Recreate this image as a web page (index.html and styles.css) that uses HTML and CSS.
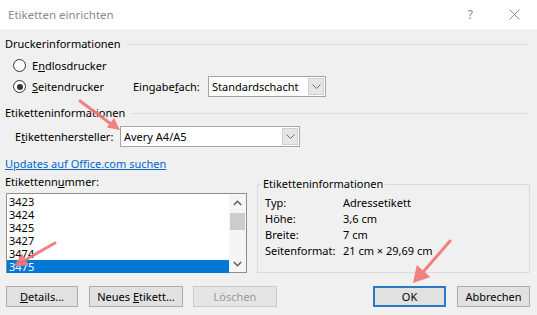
FILE: index.html
```html
<!DOCTYPE html>
<html lang="de">
<head>
<meta charset="UTF-8">
<title>Etiketten einrichten</title>
<link rel="stylesheet" href="styles.css">
</head>
<body>

<div class="titlebar">
  <span class="title">Etiketten einrichten</span>
  <span class="tb-icons">
    <span class="help">?</span>
    <svg class="close" width="11" height="11" viewBox="0 0 11 11"><path d="M0.5 0.5 L10.5 10.5 M10.5 0.5 L0.5 10.5" stroke="#8a8a8a" stroke-width="1" fill="none"/></svg>
  </span>
</div>

<div class="dialog">
  <div class="group-head"><span>Druckerinformationen</span></div>

  <div class="radio-row first">
    <label class="radio-label"><span class="radio"></span>E<u>n</u>dlosdrucker</label>
  </div>
  <div class="radio-row">
    <label class="radio-label"><span class="radio checked"></span><u>S</u>eitendrucker</label>
    <span class="field-label tray-label">Eingabe<u>f</u>ach:</span>
    <div class="combo tray">
      <span class="combo-text">Standardschacht</span>
      <span class="dd"><svg width="9" height="5" viewBox="0 0 9 5"><path d="M0.5 0.5 L4.5 4.5 L8.5 0.5" stroke="#6d6d6d" fill="none"/></svg></span>
    </div>
  </div>

  <div class="group-head second"><span>Etiketteninformationen</span></div>

  <div class="maker-row">
    <span class="field-label maker-label">E<u>t</u>ikettenhersteller:</span>
    <div class="combo maker">
      <span class="combo-text">Avery A4/A5</span>
      <span class="dd"><svg width="9" height="5" viewBox="0 0 9 5"><path d="M0.5 0.5 L4.5 4.5 L8.5 0.5" stroke="#6d6d6d" fill="none"/></svg></span>
    </div>
  </div>

  <a class="link" href="#">Updates auf Office.com suchen</a>

  <div class="lower">
    <div class="list-col">
      <div class="list-label">Etikettenn<u>u</u>mmer:</div>
      <div class="listbox">
        <ul class="items">
          <li>3423</li>
          <li>3424</li>
          <li>3425</li>
          <li>3427</li>
          <li>3474</li>
          <li class="selected">3475</li>
        </ul>
        <div class="scrollbar">
          <span class="sb-arrow"><svg width="9" height="6" viewBox="0 0 9 6"><path d="M0.8 5 L4.5 1.3 L8.2 5" stroke="#606060" stroke-width="1.6" fill="none"/></svg></span>
          <span class="sb-thumb"></span>
          <span class="sb-space"></span>
          <span class="sb-arrow"><svg width="9" height="6" viewBox="0 0 9 6"><path d="M0.8 1 L4.5 4.7 L8.2 1" stroke="#606060" stroke-width="1.6" fill="none"/></svg></span>
        </div>
      </div>
    </div>

    <fieldset class="info">
      <legend>Etiketteninformationen</legend>
      <div class="info-grid">
        <span>Typ:</span><span>Adressetikett</span>
        <span>Höhe:</span><span>3,6 cm</span>
        <span>Breite:</span><span>7 cm</span>
        <span>Seitenformat:</span><span>21 cm × 29,69 cm</span>
      </div>
    </fieldset>
  </div>

  <div class="buttons">
    <button class="btn details"><u>D</u>etails...</button>
    <button class="btn new">Neues <u>E</u>tikett...</button>
    <button class="btn delete" disabled>Löschen</button>
    <button class="btn ok">OK</button>
    <button class="btn cancel">Abbrechen</button>
  </div>
</div>

<!-- annotation arrows drawn over the screenshot -->
<svg class="arrows" width="537" height="315" viewBox="0 0 537 315">
  <g stroke="#f27474" stroke-width="3" stroke-linecap="round" fill="#f27474" opacity="0.9">
    <line x1="80" y1="101" x2="111" y2="124"/>
    <polygon points="120,130 106.8,127.6 114,118" stroke="none"/>
    <line x1="55" y1="243" x2="25" y2="260"/>
    <polygon points="14,266 21.9,253.5 28.7,265.7" stroke="none"/>
    <line x1="450" y1="241" x2="424" y2="271"/>
    <polygon points="413,283 430.3,276.9 416.8,265.1" stroke="none"/>
  </g>
</svg>

</body>
</html>
```

FILE: styles.css
```css
/* Dialog styles */
body {
  margin: 0;
  width: 537px;
  height: 315px;
  overflow: hidden;
  position: relative;
  background: #f0f0f0;
  font-family: "Noto Sans", sans-serif;
  font-size: 11px;
  line-height: 16px;
  color: #000;
}

u {
  text-decoration-thickness: 1px;
  text-underline-offset: 1px;
}

.titlebar {
  height: 29px;
  background: #fff;
  display: flex;
  align-items: center;
  justify-content: space-between;
  padding: 0 17px 0 8px;
}

.title {
  color: #8a8a8a;
  font-size: 11.5px;
}

.tb-icons {
  display: flex;
  align-items: center;
  gap: 36px;
}

.help {
  color: #8a8a8a;
  font-size: 12px;
}

.dialog {
  padding: 7px 7px 0 5px;
}

.group-head {
  display: flex;
  align-items: center;
  height: 16px;
}

.group-head::after {
  content: "";
  flex: 1;
  border-top: 1px solid #dcdcdc;
  margin: 0 3px 0 6px;
}

.group-head.second {
  margin-top: 8px;
}

.radio-row {
  display: flex;
  align-items: center;
  height: 21px;
  padding-left: 8px;
}

.radio-row.first {
  margin-top: 3px;
}

.radio-label {
  display: flex;
  align-items: center;
  width: 120px;
}

.radio {
  width: 11px;
  height: 11px;
  border: 1px solid #333;
  border-radius: 50%;
  background: #fff;
  margin-right: 6px;
  position: relative;
}

.radio.checked::after {
  content: "";
  position: absolute;
  left: 2.5px;
  top: 2.5px;
  width: 6px;
  height: 6px;
  border-radius: 50%;
  background: #333;
}

.field-label {
  display: inline-block;
}

.tray-label {
  width: 75px;
}

.combo {
  height: 21px;
  box-sizing: border-box;
  border: 1px solid #a5a5a5;
  background: #fff;
  display: flex;
  align-items: center;
}

.combo-text {
  flex: 1;
  padding-left: 3px;
}

.combo .dd {
  width: 16px;
  height: 17px;
  margin-right: 1px;
  box-sizing: border-box;
  border: 1px solid #cfcfcf;
  background: #e6e6e6;
  display: flex;
  align-items: center;
  justify-content: center;
}

.tray {
  width: 118px;
}

.maker-row {
  display: flex;
  align-items: center;
  height: 21px;
  margin-top: 5px;
  padding-left: 10px;
}

.maker-label {
  width: 105px;
}

.maker {
  width: 180px;
}

.link {
  display: inline-block;
  margin-top: 9px;
  color: #0066cc;
  text-decoration: underline;
  text-decoration-thickness: 1px;
}

.lower {
  display: flex;
  margin-top: 2px;
}

.list-col {
  width: 242px;
}

.listbox {
  margin-top: 3px;
  margin-left: 1px;
  height: 80px;
  box-sizing: border-box;
  border: 1px solid #8f8f8f;
  background: #fff;
  display: flex;
}

.items {
  list-style: none;
  margin: 0;
  padding: 1px 0 0 0;
  flex: 1;
}

.items li {
  height: 13px;
  line-height: 13px;
  padding-left: 2px;
}

.items li.selected {
  background: #0078d7;
  color: #fff;
}

.scrollbar {
  width: 17px;
  background: #f5f5f5;
  display: flex;
  flex-direction: column;
}

.sb-arrow {
  height: 17px;
  display: flex;
  align-items: center;
  justify-content: center;
}

.sb-thumb {
  height: 17px;
  margin: 2px 1px 0;
  background: #cdcdcd;
}

.sb-space {
  flex: 1;
}

.info {
  flex: 1;
  margin: 2px 0 0 10px;
  padding: 3px 7px 10px 3px;
  border: 1px solid #dcdcdc;
  min-width: 0;
}

.info legend {
  padding: 0 2px;
  line-height: 16px;
}

.info-grid {
  display: grid;
  grid-template-columns: 78px 1fr;
  grid-auto-rows: 16px;
  padding-left: 4px;
}

.buttons {
  display: flex;
  margin-top: 13px;
  padding-left: 1px;
}

.btn {
  height: 21px;
  box-sizing: border-box;
  border: 1px solid #adadad;
  background: #e1e1e1;
  font-family: inherit;
  font-size: 11px;
  color: #000;
  padding: 0;
}

.details {
  width: 72px;
}

.new {
  width: 94px;
  margin-left: 11px;
}

.delete {
  width: 84px;
  margin-left: 10px;
  background: #e5e5e5;
  border-color: #cbcbcb;
  color: #9a9a9a;
}

.ok {
  width: 73px;
  margin-left: auto;
  border: 2px solid #2b78c2;
}

.cancel {
  width: 73px;
  margin-left: 11px;
}

.arrows {
  position: absolute;
  left: 0;
  top: 0;
  pointer-events: none;
}
```
